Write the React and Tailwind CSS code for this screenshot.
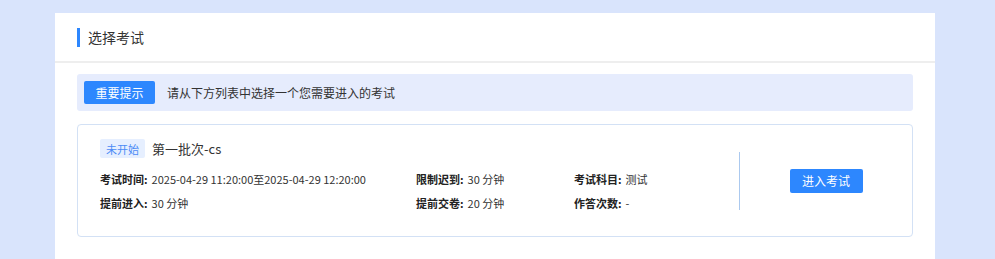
import React from 'react';

const details = [
  [
    { label: '考试时间', value: '2025-04-29 11:20:00至2025-04-29 12:20:00' },
    { label: '限制迟到', value: '30 分钟' },
    { label: '考试科目', value: '测试' },
  ],
  [
    { label: '提前进入', value: '30 分钟' },
    { label: '提前交卷', value: '20 分钟' },
    { label: '作答次数', value: '-' },
  ],
];

const Field = ({ label, value }) => (
  <div className="flex items-center text-[11px] text-[#333] whitespace-nowrap">
    <span className="font-bold text-[#222]">{label}:</span>
    <span className="ml-[4px]">{value}</span>
  </div>
);

export default function App() {
  return (
    <div
      className="w-[995px] h-[259px] bg-[#d9e4fc] pt-[13px] pl-[55px] overflow-hidden"
      style={{ fontFamily: '"Noto Sans CJK SC", "Noto Sans", sans-serif' }}
    >
      <div className="w-[880px] h-[246px] bg-white">
        {/* Header */}
        <div className="h-[50px] flex items-center px-[22px] border-b-2 border-[#eeeeee]">
          <span className="w-[3px] h-[19px] bg-[#2d87fe]" />
          <span className="ml-[8px] text-[14px] text-[#333]">选择考试</span>
        </div>

        <div className="px-[22px] pt-[11px]">
          {/* Notice */}
          <div className="h-[37px] bg-[#e6ecfd] rounded-[3px] flex items-center px-[7px]">
            <span className="w-[71px] h-[23px] bg-[#2d87fe] text-white text-[12px] flex items-center justify-center rounded-[2px]">
              重要提示
            </span>
            <span className="ml-[12px] text-[12px] text-[#333]">请从下方列表中选择一个您需要进入的考试</span>
          </div>

          {/* Exam card */}
          <div className="mt-[13px] h-[113px] border border-[#d3e1f5] rounded-[4px] flex">
            <div className="flex-1 pl-[22px] pt-[14px]">
              <div className="flex items-center">
                <span className="h-[19px] px-[6px] bg-[#e6efff] text-[#4b8bf6] text-[11px] flex items-center rounded-[2px]">
                  未开始
                </span>
                <span className="ml-[7px] text-[13px] text-[#333]">第一批次-cs</span>
              </div>
              <div className="mt-[12px] flex flex-col gap-[7px]">
                {details.map((row, i) => (
                  <div key={i} className="grid grid-cols-[316px_158px_1fr] h-[17px]">
                    {row.map((f) => (
                      <Field key={f.label} {...f} />
                    ))}
                  </div>
                ))}
              </div>
            </div>
            <div className="self-center w-px h-[58px] bg-[#abc9ef]" />
            <div className="w-[172px] flex items-center justify-center">
              <button className="w-[73px] h-[24px] bg-[#2d87fe] text-white text-[12px] rounded-[2px] flex items-center justify-center">
                进入考试
              </button>
            </div>
          </div>
        </div>
      </div>
    </div>
  );
}
